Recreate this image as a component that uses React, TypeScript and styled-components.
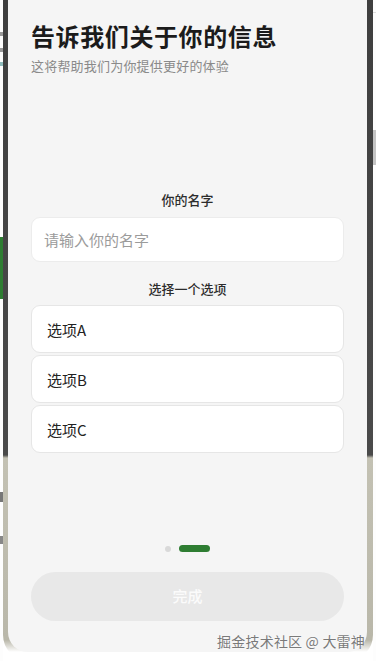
import React from "react";
import styled, { createGlobalStyle } from "styled-components";

const Global = createGlobalStyle`
  html, body { margin: 0; padding: 0; background: #ffffff; }
  body { font-family: "Noto Sans CJK SC", "Noto Sans", sans-serif; }
  * { box-sizing: border-box; }
`;

const Screen = styled.div`
  width: 376px;
  height: 661px;
  display: flex;
  overflow: hidden;
  position: relative;
  background: #ffffff;
`;

const SideStrip = styled.div`
  width: 3px;
  flex: none;
  display: flex;
  flex-direction: column;
  background: #fdfdfd;
`;

const StripBlock = styled.div<{ $h: number; $c: string; $mt?: number }>`
  height: ${(p) => p.$h}px;
  margin-top: ${(p) => p.$mt ?? 0}px;
  background: ${(p) => p.$c};
  flex: none;
`;

const Frame = styled.div`
  flex: 1;
  display: flex;
  flex-direction: column;
  padding: 0 6px 0 5px;
  background: linear-gradient(
    to bottom,
    #3f3f3f 0,
    #4a4a4a 455px,
    #c3c1b3 458px,
    #b9b7a9 640px,
    #ffffff 652px
  );
  border-radius: 0 0 26px 26px;
`;

const Sheet = styled.div`
  height: 652px;
  background: #f5f5f5;
  border-radius: 0 0 20px 20px;
  padding: 20px 23px 0 23px;
  display: flex;
  flex-direction: column;
  position: relative;
`;

const Title = styled.h1`
  margin: 0;
  font-size: 24px;
  line-height: 32px;
  font-weight: 700;
  letter-spacing: 0.6px;
  color: #1b1b1b;
`;

const Subtitle = styled.p`
  margin: 5px 0 0;
  font-size: 13px;
  line-height: 18px;
  letter-spacing: 0.2px;
  color: #8a8a8a;
`;

const Label = styled.div<{ $mt: number }>`
  margin-top: ${(p) => p.$mt}px;
  text-align: center;
  font-size: 13px;
  line-height: 18px;
  font-weight: 500;
  color: #2c2c2c;
`;

const NameInput = styled.input`
  margin-top: 8px;
  height: 45px;
  width: 100%;
  border: 1px solid #ececec;
  border-radius: 9px;
  background: #ffffff;
  padding: 0 12px;
  font-family: inherit;
  font-size: 15px;
  color: #222;
  outline: none;
  &::placeholder { color: #9b9b9b; }
`;

const OptionList = styled.div`
  margin-top: 7px;
  display: flex;
  flex-direction: column;
  gap: 2px;
`;

const Option = styled.div`
  height: 48px;
  border: 1px solid #e6e6e6;
  border-radius: 9px;
  background: #ffffff;
  display: flex;
  align-items: center;
  padding: 0 15px;
  font-size: 15px;
  color: #222;
`;

const Dots = styled.div`
  margin-top: 92px;
  display: flex;
  justify-content: center;
  align-items: center;
  gap: 8px;
  height: 7px;
`;

const Dot = styled.span<{ $active?: boolean }>`
  height: ${(p) => (p.$active ? 7 : 6)}px;
  width: ${(p) => (p.$active ? 31 : 6)}px;
  border-radius: 4px;
  background: ${(p) => (p.$active ? "#2e7d32" : "#d9d9d9")};
`;

const Done = styled.button`
  margin-top: 20px;
  height: 49px;
  width: 100%;
  border: none;
  border-radius: 25px;
  background: #e8e8e8;
  color: #fbfbfb;
  font-family: inherit;
  font-size: 15px;
  font-weight: 500;
  padding: 0 0 2px;
`;

const Watermark = styled.div`
  position: absolute;
  right: 11px;
  bottom: 11px;
  font-size: 14px;
  line-height: 18px;
  color: #7a7a7a;
  letter-spacing: 0.2px;
  white-space: nowrap;
  text-shadow: 0 0 2px #ffffff;
`;

export default function App() {
  return (
    <>
      <Global />
      <Screen>
        <SideStrip>
          <StripBlock $h={32} $c="#fdfdfd" />
          <StripBlock $h={4} $c="#9a9a9a" />
          <StripBlock $h={12} $c="#fdfdfd" />
          <StripBlock $h={4} $c="#9a9a9a" />
          <StripBlock $h={10} $c="#fdfdfd" />
          <StripBlock $h={4} $c="#8fbcbc" />
          <StripBlock $h={171} $c="#fdfdfd" />
          <StripBlock $h={62} $c="#2e7d32" />
          <StripBlock $h={193} $c="#fdfdfd" />
          <StripBlock $h={10} $c="#777" />
          <StripBlock $h={34} $c="#fdfdfd" />
          <StripBlock $h={8} $c="#888" />
        </SideStrip>
        <Frame>
          <Sheet>
            <Title>告诉我们关于你的信息</Title>
            <Subtitle>这将帮助我们为你提供更好的体验</Subtitle>
            <Label $mt={116}>你的名字</Label>
            <NameInput placeholder="请输入你的名字" />
            <Label $mt={18}>选择一个选项</Label>
            <OptionList>
              <Option>选项A</Option>
              <Option>选项B</Option>
              <Option>选项C</Option>
            </OptionList>
            <Dots>
              <Dot />
              <Dot $active />
            </Dots>
            <Done>完成</Done>
          </Sheet>
        </Frame>
        <SideStrip>
          <StripBlock $h={12} $c="#fdfdfd" />
          <StripBlock $h={1} $c="#ddd" />
          <StripBlock $h={117} $c="#fdfdfd" />
          <StripBlock $h={35} $c="#c4c4c4" />
        </SideStrip>
        <Watermark>掘金技术社区 @ 大雷神</Watermark>
      </Screen>
    </>
  );
}
